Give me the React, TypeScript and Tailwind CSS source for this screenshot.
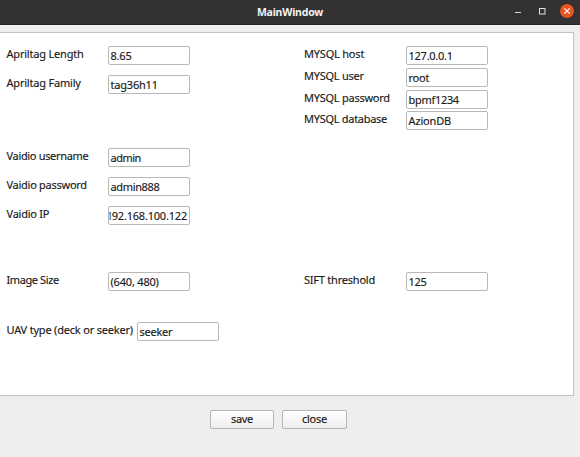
import type { ReactNode } from 'react';

type FieldProps = {
  label: string;
  value: ReactNode;
  className?: string;
  labelClass?: string;
  valueClass?: string;
  clipped?: boolean;
};

function Field({
  label,
  value,
  className = '',
  labelClass = 'w-[101px] tracking-[-0.25px]',
  valueClass = 'tracking-[-0.2px]',
  clipped = false,
}: FieldProps) {
  return (
    <div className={`flex h-[19px] items-start ${className}`}>
      <span className={`shrink-0 leading-[15px] ${labelClass}`}>{label}</span>
      <div
        className={`flex h-[19px] w-[82px] shrink-0 overflow-hidden rounded-[2px] border border-[#b8b8b8] bg-white leading-[17px] ${
          clipped ? 'justify-end pr-[2px]' : 'pl-[1.5px]'
        }`}
      >
        <span className={valueClass}>{value}</span>
      </div>
    </div>
  );
}

function TitleBar() {
  return (
    <header className="grid h-[25px] shrink-0 grid-cols-[1fr_auto_1fr] items-start border-b border-[#232221] bg-[#333131] text-[#f4f4f4] shadow-[0_1px_0_#f8f8f8]">
      <span />
      <h1 className="text-[10.5px] leading-[24px] font-bold tracking-[-0.2px] [-webkit-text-stroke:0px]">
        MainWindow
      </h1>
      <div className="flex justify-end pt-[3px] pr-[6px]">
        <svg width="66" height="16" viewBox="0 0 66 16" fill="none">
          <path d="M7 9.5h6" stroke="#d8d8d8" />
          <rect x="31.5" y="5.5" width="5.5" height="5.5" stroke="#e0e0e0" />
          <circle cx="59" cy="8" r="7" fill="#e95420" />
          <path d="M56.3 5.3l5.4 5.4M61.7 5.3l-5.4 5.4" stroke="#fff" strokeWidth="1.2" />
        </svg>
      </div>
    </header>
  );
}

function PushButton({ text, className }: { text: string; className: string }) {
  return (
    <button
      className={`h-[19px] rounded-[2px] border border-[#b6b6b6] bg-linear-to-b from-white to-[#eeeeee] text-center leading-[16px] ${className}`}
    >
      <span className="block -translate-y-px">{text}</span>
    </button>
  );
}

export default function App() {
  return (
    <div className="flex h-[457px] w-[580px] flex-col overflow-hidden bg-[#eeeeee] font-['Noto_Sans',sans-serif] text-[11px] whitespace-nowrap text-[#1a1a1a] [-webkit-text-stroke:0.15px]">
      <TitleBar />
      <main className="mt-[7px] mr-[6px] flex h-[364px] shrink-0 border border-l-0 border-[#c2c2c2] bg-white pt-[13px] pl-[6.5px]">
        <div className="flex w-[297.5px] flex-col">
          <Field label="Apriltag Length" labelClass="w-[101.5px] tracking-[-0.2px]" value="8.65" />
          <Field className="mt-[10px]" label="Apriltag Family" labelClass="w-[101.5px] tracking-[-0.2px]" value="tag36h11" />
          <Field
            className="mt-[54px]"
            label="Vaidio username"
            labelClass="w-[101.5px] tracking-[-0.33px]"
            value="admin"
            valueClass="tracking-[-0.5px]"
          />
          <Field
            className="mt-[10px]"
            label="Vaidio password"
            labelClass="w-[101.5px] tracking-[-0.27px]"
            value="admin888"
            valueClass="tracking-[-0.35px]"
          />
          <Field
            className="mt-[10px]"
            label="Vaidio IP"
            labelClass="w-[101.5px] tracking-[-0.25px]"
            value={
              <>
                <span className="-mr-[1px] text-[#4a6f9c]">1</span>92.168.100.122
              </>
            }
            valueClass="tracking-[-0.2px]"
            clipped
          />
          <Field
            className="mt-[47px]"
            label="Image Size"
            labelClass="w-[101.5px] tracking-[-0.4px]"
            value="(640, 480)"
          />
          <Field
            className="mt-[31px]"
            label="UAV type (deck or seeker)"
            labelClass="w-[130.5px] tracking-[-0.2px]"
            value="seeker"
            valueClass="tracking-[-0.25px]"
          />
        </div>
        <div className="flex flex-col">
          <Field
            label="MYSQL host"
            labelClass="w-[102px] tracking-[-0.2px]"
            value="127.0.0.1"
            valueClass="tracking-[-0.25px]"
          />
          <Field
            className="mt-[3px]"
            label="MYSQL user"
            labelClass="w-[102px] tracking-[-0.25px]"
            value="root"
          />
          <Field
            className="mt-[3px]"
            label="MYSQL password"
            labelClass="w-[102px] tracking-[-0.25px]"
            value="bpmf1234"
            valueClass="tracking-[-0.3px]"
          />
          <Field
            className="mt-[2px]"
            label="MYSQL database"
            labelClass="w-[102px] tracking-[-0.28px]"
            value="AzionDB"
            valueClass="tracking-[-0.15px]"
          />
          <Field
            className="mt-[142px]"
            label="SIFT threshold"
            labelClass="w-[102px] tracking-[-0.22px]"
            value="125"
            valueClass="tracking-[-0.3px]"
          />
        </div>
      </main>
      <footer className="mt-[14px] flex gap-[8px] pl-[210px]">
        <PushButton text="save" className="w-[64px] tracking-[-0.3px]" />
        <PushButton text="close" className="w-[65px] tracking-[-0.2px]" />
      </footer>
    </div>
  );
}
